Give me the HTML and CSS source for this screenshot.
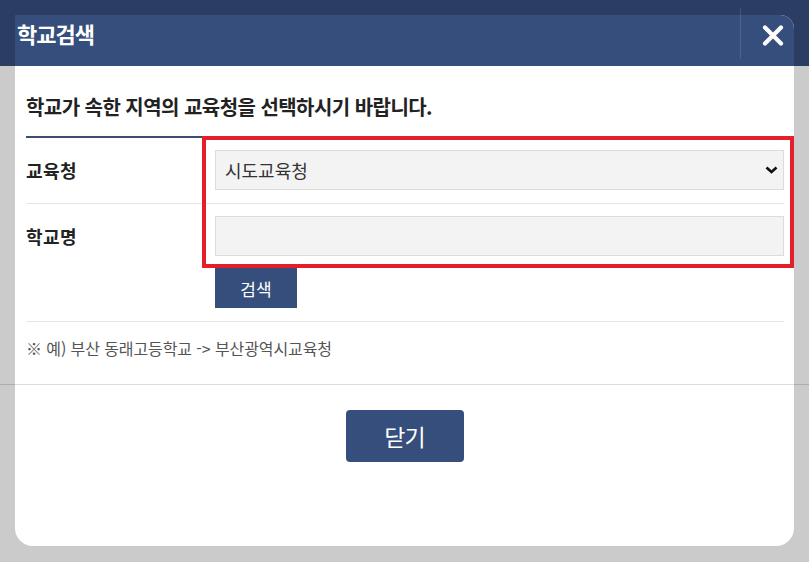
FILE: index.html
```html
<!DOCTYPE html>
<html lang="ko">
<head>
<meta charset="utf-8">
<title>학교검색</title>
<link rel="stylesheet" href="styles.css">
</head>
<body>
<div class="modal">
  <div class="modal-head">
    <h1 class="title">학교검색</h1>
    <span class="head-sep"></span>
    <button class="close" type="button" aria-label="닫기">
      <svg width="22" height="21" viewBox="0 0 22 21"><path d="M3 2.5 L19 18.5 M19 2.5 L3 18.5" stroke="#fff" stroke-width="4.2" stroke-linecap="round" fill="none"/></svg>
    </button>
  </div>
  <div class="modal-body">
    <p class="lead">학교가 속한 지역의 교육청을 선택하시기 바랍니다.</p>
    <div class="form">
      <div class="row">
        <label class="label">교육청</label>
        <div class="select-wrap">
          <select class="field select"><option>시도교육청</option></select>
          <svg class="chev" width="13" height="8" viewBox="0 0 13 8"><path d="M1.5 1.5 L6.5 6 L11.5 1.5" stroke="#111" stroke-width="2.6" fill="none"/></svg>
        </div>
      </div>
      <div class="row">
        <label class="label">학교명</label>
        <div class="ctl">
          <input class="field" type="text">
          <button class="search" type="button">검색</button>
        </div>
      </div>
    </div>
    <p class="note">※ 예) 부산 동래고등학교 -&gt; 부산광역시교육청</p>
  </div>
  <div class="modal-foot">
    <button class="btn-close" type="button">닫기</button>
  </div>
  <div class="mark"></div>
</div>
<div class="scanline"></div>
</body>
</html>
```
FILE: styles.css
```css
html, body {
  margin: 0;
  padding: 0;
}
body {
  width: 809px;
  height: 562px;
  overflow: hidden;
  position: relative;
  background: linear-gradient(#2b3d63 0, #2b3d63 66px, #cbcbcb 66px);
  font-family: "Noto Sans CJK KR", "Noto Sans", sans-serif;
  color: #222;
}
.modal {
  margin: 15px 0 0 15px;
  width: 779px;
  height: 531px;
  background: #fff;
  border-radius: 0 14px 18px 18px;
  position: relative;
  display: flex;
  flex-direction: column;
}
.modal-head {
  height: 51px;
  background: #354e7c;
  border-radius: 0 14px 0 0;
  display: flex;
  justify-content: space-between;
  align-items: flex-start;
  position: relative;
}
.title {
  margin: 3px 0 0 2px;
  color: #fff;
  font-size: 22px;
  font-weight: 700;
  letter-spacing: -1px;
  line-height: 30px;
}
.head-sep {
  position: absolute;
  left: 725px;
  top: -7px;
  width: 1px;
  height: 51px;
  background: rgba(255, 255, 255, 0.12);
}
.close {
  margin: 10px 10px 0 0;
  padding: 0;
  border: 0;
  background: none;
  width: 22px;
  height: 21px;
  display: block;
}
.close svg { display: block; }
.modal-body {
  padding: 26px 10px 0 11px;
}
.lead {
  margin: 0 0 14px;
  font-size: 20px;
  font-weight: 700;
  letter-spacing: -0.55px;
  line-height: 30px;
  color: #222;
}
.form {
  border-top: 2px solid #3b4d73;
}
.row {
  display: grid;
  grid-template-columns: 189px 1fr;
  align-items: start;
  padding: 12px 0 13px;
  border-bottom: 1px solid #e6e6e6;
}
.label {
  font-size: 18px;
  font-weight: 700;
  line-height: 40px;
  color: #222;
  letter-spacing: 0.4px;
}
.select-wrap {
  position: relative;
}
.field {
  display: block;
  box-sizing: border-box;
  width: 100%;
  height: 40px;
  margin: 0;
  border: 1px solid #dcdcdc;
  background: #f3f3f3;
  font-family: inherit;
  font-size: 18px;
  color: #333;
  padding: 0 9px;
  border-radius: 0;
  outline: none;
}
.select {
  appearance: none;
  -webkit-appearance: none;
  line-height: 38px;
}
.chev {
  position: absolute;
  right: 6px;
  top: 16px;
  display: block;
}
.ctl {
  display: flex;
  flex-direction: column;
  align-items: flex-start;
  gap: 12px;
}
.search {
  width: 82px;
  height: 40px;
  border: 0;
  background: #354e7c;
  color: #fff;
  font-family: inherit;
  font-size: 17px;
  padding: 0;
}
.note {
  margin: 14px 0 0;
  font-size: 16px;
  line-height: 24px;
  color: #555;
  letter-spacing: -0.1px;
}
.modal-foot {
  display: flex;
  justify-content: center;
  padding-top: 50px;
}
.btn-close {
  width: 118px;
  height: 52px;
  border: 0;
  border-radius: 4px;
  background: #354e7c;
  color: #fff;
  font-family: inherit;
  font-size: 23px;
  letter-spacing: -1px;
  padding: 0;
}
.mark {
  position: absolute;
  left: 187px;
  top: 121px;
  width: 592px;
  height: 132px;
  box-sizing: border-box;
  border: 4px solid #e3202a;
  pointer-events: none;
}
.scanline {
  position: absolute;
  left: 0;
  top: 384px;
  width: 809px;
  height: 1px;
  background: rgba(0, 0, 0, 0.14);
}
```
